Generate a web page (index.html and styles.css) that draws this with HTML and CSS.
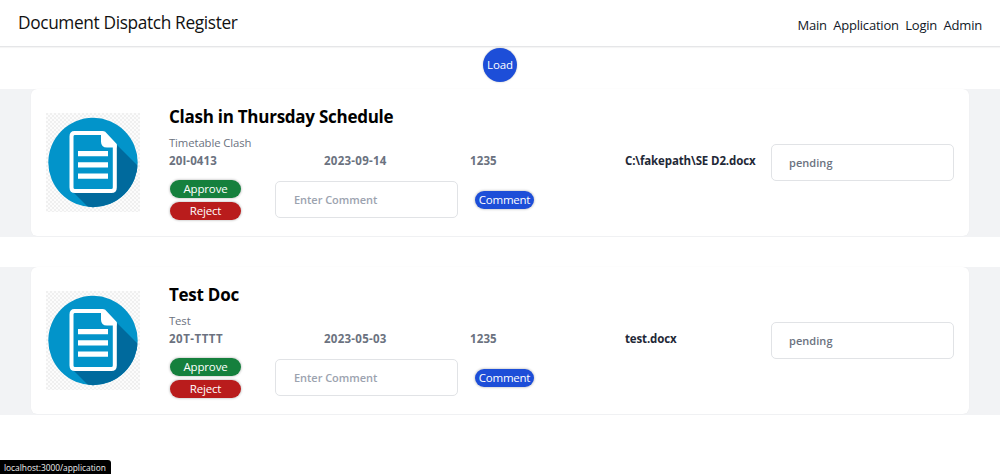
FILE: index.html
```
<!DOCTYPE html>
<html lang="en">
<head>
<meta charset="utf-8">
<title>Document Dispatch Register</title>
<link rel="stylesheet" href="styles.css">
</head>
<body>
<svg class="defs" width="0" height="0" aria-hidden="true">
  <defs>
    <pattern id="checks" width="4" height="4" patternUnits="userSpaceOnUse">
      <rect width="4" height="4" fill="#fcfcfc"/>
      <path d="M0 0h2v2H0zM2 2h2v2H2z" fill="#f0f0f0"/>
    </pattern>
    <clipPath id="disc"><circle cx="47" cy="49.500" r="44.700"/></clipPath>
    <symbol id="document" viewBox="0 0 94 99">
      <rect width="94" height="99" fill="url(#checks)"/>
      <circle cx="47" cy="49.500" r="44.700" fill="#0294ca"/>
      <path clip-path="url(#disc)" d="M70 31L94 55V99H47L25 77H66L70 73z" fill="#006a9d"/>
      <path d="M28.500 20H56.500L68.800 32.500V74.500Q68.800 78 65.300 78H29Q25.500 78 25.500 74.500V23.500Q25.500 20 28.500 20z" fill="#0294ca" stroke="#fff" stroke-width="4" stroke-linejoin="round"/>
      <path d="M55 18.500H59L70.700 31V34.500H61Q55 34.500 55 28.500z" fill="#fff"/>
      <path d="M32 38h30v5.300H32zM32 49.300h30v5.300H32zM32 60.500h30v5.300H32z" fill="#fff"/>
    </symbol>
  </defs>
</svg>
<header class="navbar">
  <h1 class="brand">Document Dispatch Register</h1>
  <nav class="links">
    <a class="link">Main</a><a class="link">Application</a><a class="link">Login</a><a class="link">Admin</a>
  </nav>
</header>
<main>
  <div class="toolbar"><button class="load">Load</button></div>
  <section class="band">
    <article class="card">
      <svg class="icon"><use href="#document"/></svg>
      <div class="details">
        <h2 class="title">Clash in Thursday Schedule</h2>
        <p class="subject">Timetable Clash</p>
        <div class="meta"><span>20I-0413</span><span class="date">2023-09-14</span><span>1235</span><span class="file">C:\fakepath\SE D2.docx</span></div>
        <div class="actions">
          <div class="decisions"><button class="pill approve">Approve</button><button class="pill reject">Reject</button></div>
          <input class="field" type="text" placeholder="Enter Comment">
          <button class="pill comment">Comment</button>
        </div>
      </div>
      <div class="field status">pending</div>
    </article>
  </section>
  <section class="band">
    <article class="card">
      <svg class="icon"><use href="#document"/></svg>
      <div class="details">
        <h2 class="title">Test Doc</h2>
        <p class="subject">Test</p>
        <div class="meta"><span class="wide">20T-TTTT</span><span class="date">2023-05-03</span><span>1235</span><span class="file">test.docx</span></div>
        <div class="actions">
          <div class="decisions"><button class="pill approve">Approve</button><button class="pill reject">Reject</button></div>
          <input class="field" type="text" placeholder="Enter Comment">
          <button class="pill comment">Comment</button>
        </div>
      </div>
      <div class="field status">pending</div>
    </article>
  </section>
</main>
<div class="url-hint">localhost:3000/application</div>
</body>
</html>
```
FILE: styles.css
```
* { box-sizing: border-box; }
body { margin: 0; height: 474px; overflow: hidden; background: #fff; color: #111827; font-family: "Segoe UI", "Open Sans", "Noto Sans", sans-serif; }
h1, h2, p { margin: 0; white-space: nowrap; }
button { border: 0; padding: 0; font: inherit; color: #fff; }
.defs { display: block; height: 0; }
.navbar { display: flex; justify-content: space-between; height: 47px; padding: 0 18px; border-bottom: 1px solid #e5e6e8; box-shadow: 0 1px 1px rgba(0,0,0,.04); }
.brand { font-size: 17.300px; font-weight: 400; line-height: 46px; color: #111; letter-spacing: -.36px; }
.links { display: flex; gap: 6.400px; padding-top: 2px; font-size: 13px; line-height: 46px; letter-spacing: -.2px; }
.link { white-space: nowrap; }
.toolbar { display: flex; justify-content: center; height: 42px; padding-top: 0.500px; }
.load { width: 34px; height: 34px; padding-bottom: 1px; border-radius: 50%; background: #1d4ed8; font-size: 11.500px; letter-spacing: -.1px; box-shadow: 0 0 2px rgba(0,0,0,.25); }
.band { height: 148px; margin-bottom: 30px; padding: 0 31px; background: #f2f3f5; }
.card { display: flex; height: 147px; padding-left: 15px; background: #fff; border-radius: 6px; box-shadow: 0 0 1px rgba(0,0,0,.08); }
.icon { width: 94px; height: 99px; margin-top: 24px; flex: none; }
.details { width: 602px; margin-left: 29px; padding-top: 15px; flex: none; }
.title { height: 31px; font-size: 17px; line-height: 25px; font-weight: 700; color: #000; letter-spacing: -.26px; }
.subject { height: 18px; font-size: 11.300px; line-height: 15px; color: #6b7280; letter-spacing: -.1px; }
.meta { display: grid; grid-template-columns: 155px 146px 155px 146px; height: 18px; font-size: 11.500px; line-height: 16px; font-weight: 700; color: #6b7280; white-space: nowrap; letter-spacing: .12px; }
.date { letter-spacing: .26px; }
.wide { letter-spacing: .5px; }
.file { color: #1f2937; letter-spacing: -.13px; }
.actions { display: flex; padding-top: 9px; }
.decisions { display: flex; flex-direction: column; gap: 4px; width: 106px; padding-left: 1px; }
.pill { height: 18px; border-radius: 9px; font-size: 11.500px; line-height: 18px; letter-spacing: -.16px; box-shadow: 0 0 2px 1px rgba(0,0,0,.16); }
.approve, .reject { width: 71px; }
.approve { background: #15803d; }
.reject { background: #b91c1c; }
.field { width: 183px; height: 37px; padding: 0 17px; border: 1px solid #e1e3e6; border-radius: 5px; background: #fff; color: #6b7280; font: 600 11px/36px "Segoe UI", "Open Sans", "Noto Sans", sans-serif; letter-spacing: .05px; }
.field::placeholder { color: #9ca3af; opacity: 1; }
.actions .field { margin-top: 1px; padding-left: 18px; letter-spacing: -.04px; }
.comment { width: 59px; margin: 11px 0 0 17px; background: #1d4ed8; letter-spacing: -.25px; }
.status { margin-top: 55px; }
.url-hint { position: absolute; left: 0; bottom: 0; width: 111px; height: 14px; padding-left: 4px; border-radius: 0 3px 0 0; background: #000; color: #eee; font-size: 8.400px; line-height: 15px; letter-spacing: -.03px; white-space: nowrap; }
```
